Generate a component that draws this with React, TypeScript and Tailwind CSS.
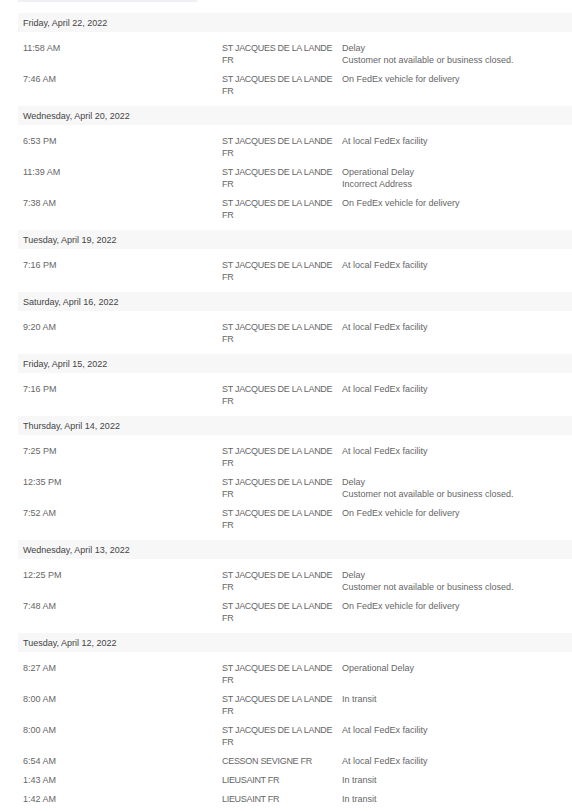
import React from "react";

type Row = { time: string; loc: string; status: string[] };
type Group = { date: string; rows: Row[] };

const SJ = "ST JACQUES DE LA LANDE FR";

const groups: Group[] = [
  {
    date: "Friday, April 22, 2022",
    rows: [
      { time: "11:58 AM", loc: SJ, status: ["Delay", "Customer not available or business closed."] },
      { time: "7:46 AM", loc: SJ, status: ["On FedEx vehicle for delivery"] },
    ],
  },
  {
    date: "Wednesday, April 20, 2022",
    rows: [
      { time: "6:53 PM", loc: SJ, status: ["At local FedEx facility"] },
      { time: "11:39 AM", loc: SJ, status: ["Operational Delay", "Incorrect Address"] },
      { time: "7:38 AM", loc: SJ, status: ["On FedEx vehicle for delivery"] },
    ],
  },
  {
    date: "Tuesday, April 19, 2022",
    rows: [{ time: "7:16 PM", loc: SJ, status: ["At local FedEx facility"] }],
  },
  {
    date: "Saturday, April 16, 2022",
    rows: [{ time: "9:20 AM", loc: SJ, status: ["At local FedEx facility"] }],
  },
  {
    date: "Friday, April 15, 2022",
    rows: [{ time: "7:16 PM", loc: SJ, status: ["At local FedEx facility"] }],
  },
  {
    date: "Thursday, April 14, 2022",
    rows: [
      { time: "7:25 PM", loc: SJ, status: ["At local FedEx facility"] },
      { time: "12:35 PM", loc: SJ, status: ["Delay", "Customer not available or business closed."] },
      { time: "7:52 AM", loc: SJ, status: ["On FedEx vehicle for delivery"] },
    ],
  },
  {
    date: "Wednesday, April 13, 2022",
    rows: [
      { time: "12:25 PM", loc: SJ, status: ["Delay", "Customer not available or business closed."] },
      { time: "7:48 AM", loc: SJ, status: ["On FedEx vehicle for delivery"] },
    ],
  },
  {
    date: "Tuesday, April 12, 2022",
    rows: [
      { time: "8:27 AM", loc: SJ, status: ["Operational Delay"] },
      { time: "8:00 AM", loc: SJ, status: ["In transit"] },
      { time: "8:00 AM", loc: SJ, status: ["At local FedEx facility"] },
      { time: "6:54 AM", loc: "CESSON SEVIGNE FR", status: ["At local FedEx facility"] },
      { time: "1:43 AM", loc: "LIEUSAINT FR", status: ["In transit"] },
      { time: "1:42 AM", loc: "LIEUSAINT FR", status: ["In transit"] },
    ],
  },
];

export default function App() {
  return (
    <div
      className="w-[572px] bg-white text-[9px] leading-[12px] text-[#666]"
      style={{ fontFamily: '"Liberation Sans", Arial, sans-serif' }}
    >
      <div className="ml-[18px] w-[179px] h-[2px] bg-[#eef0f4]" />
      <div className="ml-[18px] mt-[11px]">
        {groups.map((g, gi) => (
          <div key={gi}>
            <div className="h-[19px] bg-[#f7f7f7] flex items-center pl-[5px] text-[#444]">
              {g.date}
            </div>
            <div className="py-[6px]">
              {g.rows.map((r, ri) => (
                <div key={ri} className="flex py-[3.5px]">
                  <div className="w-[204px] pl-[5px] shrink-0">{r.time}</div>
                  <div className="w-[120px] shrink-0 pr-[6px] tracking-[-0.3px]">{r.loc}</div>
                  <div className="flex-1">
                    {r.status.map((s, si) => (
                      <div key={si}>{s}</div>
                    ))}
                  </div>
                </div>
              ))}
            </div>
          </div>
        ))}
      </div>
    </div>
  );
}
